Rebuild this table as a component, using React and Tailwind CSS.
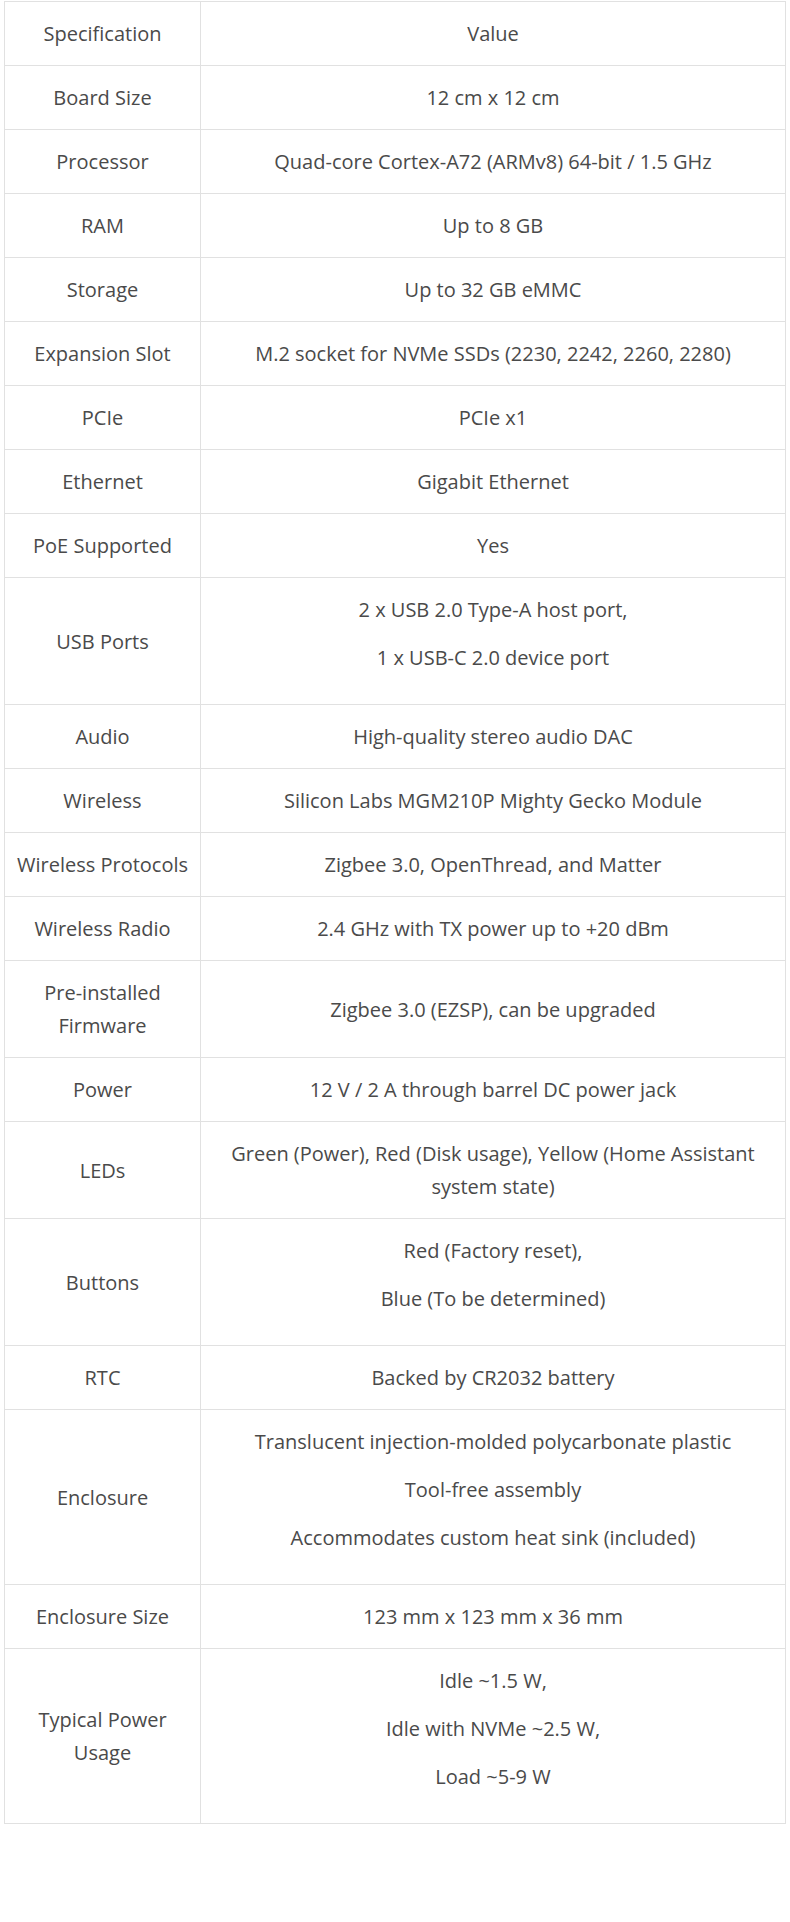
const specs = [
  ['Board Size', ['12 cm x 12 cm']],
  ['Processor', ['Quad-core Cortex-A72 (ARMv8) 64-bit / 1.5 GHz']],
  ['RAM', ['Up to 8 GB']],
  ['Storage', ['Up to 32 GB eMMC']],
  ['Expansion Slot', ['M.2 socket for NVMe SSDs (2230, 2242, 2260, 2280)']],
  ['PCIe', ['PCIe x1']],
  ['Ethernet', ['Gigabit Ethernet']],
  ['PoE Supported', ['Yes']],
  ['USB Ports', ['2 x USB 2.0 Type-A host port,', '1 x USB-C 2.0 device port'], true],
  ['Audio', ['High-quality stereo audio DAC']],
  ['Wireless', ['Silicon Labs MGM210P Mighty Gecko Module']],
  ['Wireless Protocols', ['Zigbee 3.0, OpenThread, and Matter']],
  ['Wireless Radio', ['2.4 GHz with TX power up to +20 dBm']],
  ['Pre-installed Firmware', ['Zigbee 3.0 (EZSP), can be upgraded']],
  ['Power', ['12 V / 2 A through barrel DC power jack']],
  ['LEDs', ['Green (Power), Red (Disk usage), Yellow (Home Assistant system state)']],
  ['Buttons', ['Red (Factory reset),', 'Blue (To be determined)'], true],
  ['RTC', ['Backed by CR2032 battery']],
  [
    'Enclosure',
    [
      'Translucent injection-molded polycarbonate plastic',
      'Tool-free assembly',
      'Accommodates custom heat sink (included)',
    ],
    true,
  ],
  ['Enclosure Size', ['123 mm x 123 mm x 36 mm']],
  ['Typical Power Usage', ['Idle ~1.5 W,', 'Idle with NVMe ~2.5 W,', 'Load ~5-9 W'], true],
];

const cell = 'border border-[#e1e1e1] py-[15px] text-center align-middle font-normal';
const nameCell = `${cell} px-[6px]`;
const valueCell = `${cell} px-[30px]`;

function App() {
  return (
    <div className="min-h-[1922px] bg-white pt-[1px] font-['Open_Sans',sans-serif] text-[20px] leading-[33px] text-[#4a4a4a]">
      <table className="ml-[4px] w-[782px] table-fixed border-collapse">
        <colgroup>
          <col className="w-[196px]" />
          <col />
        </colgroup>
        <thead>
          <tr>
            <th className={nameCell}>Specification</th>
            <th className={valueCell}>Value</th>
          </tr>
        </thead>
        <tbody>
          {specs.map(([name, lines, paras]) => (
            <tr key={name}>
              <td className={nameCell}>
                {name === 'Pre-installed Firmware' || name === 'Typical Power Usage' ? (
                  <span className="mx-auto block max-w-[150px]">{name}</span>
                ) : (
                  name
                )}
              </td>
              <td className={valueCell}>
                {paras
                  ? lines.map((l) => (
                      <p key={l} className="mb-[15px]">
                        {l}
                      </p>
                    ))
                  : lines[0]}
              </td>
            </tr>
          ))}
        </tbody>
      </table>
    </div>
  );
}

export default App;
